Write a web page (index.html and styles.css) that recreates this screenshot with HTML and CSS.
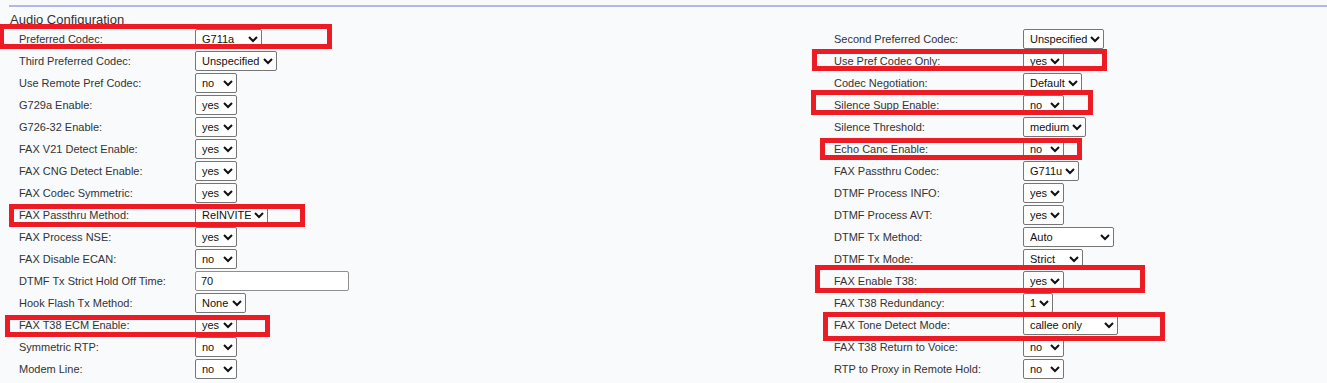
FILE: index.html
```html
<!DOCTYPE html>
<html>
<head>
<meta charset="utf-8">
<title>Audio Configuration</title>
<link rel="stylesheet" href="styles.css">
</head>
<body>

<div id="page">
    <div class="panel">
        <h2>Audio Configuration</h2>

        <div class="form">
            <!-- row 1 -->
            <span>Preferred Codec:</span>
            <span><select class="w67"><option>G711a</option></select></span>
            <span>Second Preferred Codec:</span>
            <span><select class="w81"><option>Unspecified</option></select></span>

            <span>Third Preferred Codec:</span>
            <span><select class="w82"><option>Unspecified</option></select></span>
            <span>Use Pref Codec Only:</span>
            <span><select class="w41"><option>yes</option></select></span>

            <span>Use Remote Pref Codec:</span>
            <span><select class="w42"><option>no</option></select></span>
            <span>Codec Negotiation:</span>
            <span><select class="w59"><option>Default</option></select></span>

            <span>G729a Enable:</span>
            <span><select class="w42"><option>yes</option></select></span>
            <span>Silence Supp Enable:</span>
            <span><select class="w41"><option>no</option></select></span>

            <span>G726-32 Enable:</span>
            <span><select class="w42"><option>yes</option></select></span>
            <span>Silence Threshold:</span>
            <span><select class="w63"><option>medium</option></select></span>

            <span>FAX V21 Detect Enable:</span>
            <span><select class="w42"><option>yes</option></select></span>
            <span>Echo Canc Enable:</span>
            <span><select class="w41"><option>no</option></select></span>

            <span>FAX CNG Detect Enable:</span>
            <span><select class="w42"><option>yes</option></select></span>
            <span>FAX Passthru Codec:</span>
            <span><select class="w56"><option>G711u</option></select></span>

            <span>FAX Codec Symmetric:</span>
            <span><select class="w42"><option>yes</option></select></span>
            <span>DTMF Process INFO:</span>
            <span><select class="w41"><option>yes</option></select></span>

            <span>FAX Passthru Method:</span>
            <span><select class="w73"><option>ReINVITE</option></select></span>
            <span>DTMF Process AVT:</span>
            <span><select class="w41"><option>yes</option></select></span>

            <span>FAX Process NSE:</span>
            <span><select class="w42"><option>yes</option></select></span>
            <span>DTMF Tx Method:</span>
            <span><select class="w91"><option>Auto</option></select></span>

            <span>FAX Disable ECAN:</span>
            <span><select class="w42"><option>no</option></select></span>
            <span>DTMF Tx Mode:</span>
            <span><select class="w60"><option>Strict</option></select></span>

            <span>DTMF Tx Strict Hold Off Time:</span>
            <span><input type="text" class="num" value="70"></span>
            <span>FAX Enable T38:</span>
            <span><select class="w41"><option>yes</option></select></span>

            <span>Hook Flash Tx Method:</span>
            <span><select class="w51"><option>None</option></select></span>
            <span>FAX T38 Redundancy:</span>
            <span><select class="w30"><option>1</option></select></span>

            <span>FAX T38 ECM Enable:</span>
            <span><select class="w42"><option>yes</option></select></span>
            <span>FAX Tone Detect Mode:</span>
            <span><select class="w95"><option>callee only</option></select></span>

            <span>Symmetric RTP:</span>
            <span><select class="w42"><option>no</option></select></span>
            <span>FAX T38 Return to Voice:</span>
            <span><select class="w41"><option>no</option></select></span>

            <span>Modem Line:</span>
            <span><select class="w42"><option>no</option></select></span>
            <span>RTP to Proxy in Remote Hold:</span>
            <span><select class="w41"><option>no</option></select></span>
        </div>
    </div>

    <!-- red highlight marks drawn over the form -->
    <div class="mark m1"></div>
    <div class="mark m2"></div>
    <div class="mark m3"></div>
    <div class="mark m4"></div>
    <div class="mark m5"></div>
    <div class="mark m6"></div>
    <div class="mark m7"></div>
    <div class="mark m8"></div>
</div>

</body>
</html>
```

FILE: styles.css
```css
html, body {
    margin: 0;
    background-color: #f9fafc;
}

* {
    font-family: "Liberation Sans", Arial, sans-serif;
}

#page {
    position: relative;
    height: 383px;
    overflow: hidden;
}

.panel {
    margin: 5px 0 0 9px;
    border-top: 2px solid #b6b6ef;
}

h2 {
    margin: 5px 0 1px 1px;
    font-size: 13px;
    line-height: 15px;
    font-weight: normal;
    color: #333;
}

.form {
    display: grid;
    grid-template-columns: 176px 639px 189px auto;
    grid-auto-rows: 22px;
    align-items: center;
    padding-left: 10px;
    font-size: 11px;
    color: #333;
}

.form > span {
    display: flex;
    align-items: center;
    height: 22px;
}

select {
    height: 20px;
    margin: 0;
    padding: 0 0 0 2px;
    font-size: 11px;
    color: #111;
    background-color: #fff;
    border: 1px solid #767676;
    border-radius: 2px;
}

.num {
    box-sizing: border-box;
    width: 154px;
    height: 20px;
    margin: 0;
    padding: 0 5px;
    font-size: 11px;
    color: #111;
    background-color: #fff;
    border: 1px solid #8f8f8f;
    border-radius: 2px;
}

.w30 { width: 30px; }
.w41 { width: 41px; }
.w42 { width: 42px; }
.w51 { width: 51px; }
.w56 { width: 56px; }
.w59 { width: 59px; }
.w60 { width: 60px; }
.w63 { width: 63px; }
.w67 { width: 67px; }
.w73 { width: 73px; }
.w81 { width: 81px; }
.w82 { width: 82px; }
.w91 { width: 91px; }
.w95 { width: 95px; }

.mark {
    position: absolute;
    box-sizing: border-box;
    border: 5px solid #ed1c24;
}

.m1 { left: -1px;  top: 24px;  width: 333px; height: 25px; }
.m2 { left: 9px;   top: 204px; width: 296px; height: 23px; }
.m3 { left: 5px;   top: 315px; width: 265px; height: 22px; }
.m4 { left: 812px; top: 49px;  width: 295px; height: 22px; }
.m5 { left: 811px; top: 90px;  width: 282px; height: 25px; }
.m6 { left: 820px; top: 138px; width: 262px; height: 22px; }
.m7 { left: 815px; top: 265px; width: 330px; height: 28px; }
.m8 { left: 823px; top: 312px; width: 342px; height: 29px; }
```
